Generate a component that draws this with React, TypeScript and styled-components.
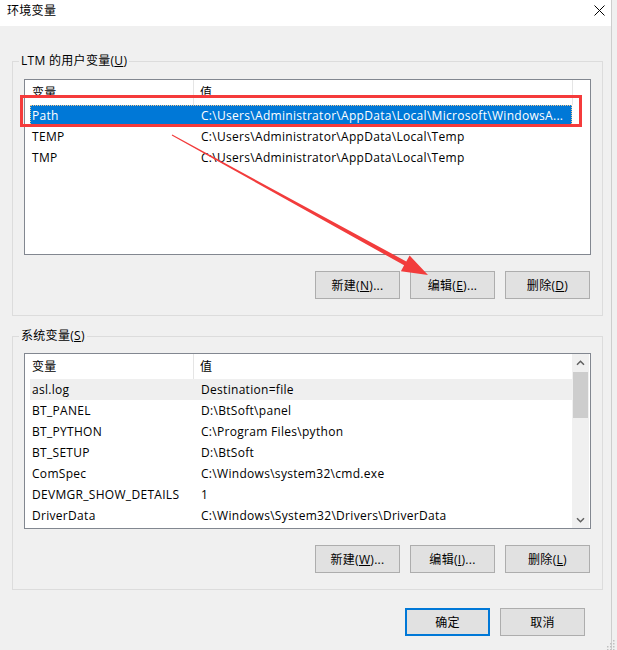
import React from 'react';
import styled, { createGlobalStyle } from 'styled-components';

const GlobalStyle = createGlobalStyle`
  html, body { margin: 0; padding: 0; background: #f0f0f0; }
  body {
    width: 617px; height: 650px; overflow: hidden;
    font-family: "Open Sans", "Noto Sans CJK SC", sans-serif;
    font-size: 12px; letter-spacing: 0.3px; color: #000;
  }
  * { box-sizing: border-box; }
`;

const Page = styled.div`
  position: relative;
  width: 617px;
  height: 650px;
  display: flex;
  background: #f0f0f0;
`;

const Window = styled.div`
  width: 612px;
  height: 650px;
  border-right: 1px solid #cdcdcd;
  background: #f0f0f0;
  display: flex;
  flex-direction: column;
`;

const TitleBar = styled.div`
  height: 26px;
  flex: none;
  background: #fff;
  display: flex;
  justify-content: space-between;
  align-items: flex-start;
  padding: 3px 6px 0 7px;
  line-height: 16px;
`;

const CloseIcon = styled.svg`
  margin-top: 2px;
  width: 11px;
  height: 11px;
`;

const Group = styled.fieldset<{ $top: number }>`
  margin: ${p => p.$top}px 0 0 12px;
  width: 591px;
  border: 1px solid #dcdcdc;
  padding: 0;
  min-width: 0;
`;

const Legend = styled.legend`
  margin-left: 6px;
  padding: 0 2px;
  line-height: 16px;
`;

const GroupBody = styled.div<{ $top: number }>`
  padding: ${p => p.$top}px 11px 16px 11px;
  display: flex;
  flex-direction: column;
`;

const List = styled.div`
  width: 567px;
  height: 176px;
  border: 1px solid #828790;
  background: #fff;
  display: flex;
  overflow: hidden;
`;

const ListContent = styled.div`
  flex: none;
  width: 547px;
  padding-left: 5px;
  display: flex;
  flex-direction: column;
`;

const Row = styled.div<{ $state?: 'selected' | 'hover' | 'none' }>`
  display: grid;
  grid-template-columns: 164px 378px;
  height: 21px;
  line-height: 21px;
  white-space: nowrap;
  background: ${p => (p.$state === 'selected' ? '#0078d7' : p.$state === 'hover' ? '#efefef' : 'transparent')};
  color: ${p => (p.$state === 'selected' ? '#fff' : '#000')};
  outline: ${p => (p.$state === 'selected' ? '1px dotted #f3c58a' : 'none')};
  outline-offset: -1px;
`;

const HeaderRow = styled.div`
  display: grid;
  grid-template-columns: 164px 379px;
  height: 25px;
  line-height: 25px;
  flex: none;
`;

const HeaderCell = styled.div<{ $pad: number }>`
  padding-left: ${p => p.$pad}px;
  border-right: 1px solid #e5e5e5;
`;

const Cell = styled.div<{ $pad: number }>`
  padding-left: ${p => p.$pad}px;
  overflow: hidden;
`;

const ScrollBar = styled.div`
  flex: none;
  width: 17px;
  background: #f0f0f0;
  display: flex;
  flex-direction: column;
  align-items: center;
`;

const ScrollBtn = styled.div`
  width: 17px;
  height: 17px;
  flex: none;
  display: flex;
  align-items: center;
  justify-content: center;
`;

const Thumb = styled.div`
  width: 15px;
  height: 46px;
  margin-top: 1px;
  background: #cdcdcd;
  flex: none;
`;

const Track = styled.div`
  flex: 1;
  width: 100%;
  display: flex;
  flex-direction: column;
  align-items: center;
`;

const ButtonRow = styled.div<{ $top: number; $right: number }>`
  display: flex;
  justify-content: flex-end;
  gap: 10px;
  margin-top: ${p => p.$top}px;
  padding-right: ${p => p.$right}px;
`;

const Button = styled.div<{ $primary?: boolean }>`
  width: 85px;
  height: 28px;
  background: #e1e1e1;
  border: ${p => (p.$primary ? '2px solid #0078d7' : '1px solid #adadad')};
  display: flex;
  align-items: center;
  justify-content: center;
  white-space: nowrap;
`;

const Overlay = styled.svg`
  position: absolute;
  left: 0;
  top: 0;
  width: 617px;
  height: 650px;
  pointer-events: none;
`;

const Grip = styled.svg`
  position: absolute;
  right: 2px;
  bottom: 0;
  width: 10px;
  height: 10px;
`;

type Item = { name: string; value: string; state?: 'selected' | 'hover' | 'none' };

const userVars: Item[] = [
  { name: 'Path', value: 'C:\\Users\\Administrator\\AppData\\Local\\Microsoft\\WindowsA...', state: 'selected' },
  { name: 'TEMP', value: 'C:\\Users\\Administrator\\AppData\\Local\\Temp' },
  { name: 'TMP', value: 'C:\\Users\\Administrator\\AppData\\Local\\Temp' },
];

const sysVars: Item[] = [
  { name: 'asl.log', value: 'Destination=file', state: 'hover' },
  { name: 'BT_PANEL', value: 'D:\\BtSoft\\panel' },
  { name: 'BT_PYTHON', value: 'C:\\Program Files\\python' },
  { name: 'BT_SETUP', value: 'D:\\BtSoft' },
  { name: 'ComSpec', value: 'C:\\Windows\\system32\\cmd.exe' },
  { name: 'DEVMGR_SHOW_DETAILS', value: '1' },
  { name: 'DriverData', value: 'C:\\Windows\\System32\\Drivers\\DriverData' },
];

const Chevron = ({ down }: { down?: boolean }) => (
  <svg width="9" height="6" viewBox="0 0 9 6">
    <path
      d={down ? 'M1 1.2 L4.5 4.7 L8 1.2' : 'M1 4.8 L4.5 1.3 L8 4.8'}
      fill="none"
      stroke="#606060"
      strokeWidth="1.5"
    />
  </svg>
);

const VarList = ({ items, scroll }: { items: Item[]; scroll?: boolean }) => (
  <List>
    <ListContent>
      <HeaderRow>
        <HeaderCell $pad={2}>变量</HeaderCell>
        <HeaderCell $pad={6}>值</HeaderCell>
      </HeaderRow>
      {items.map(it => (
        <Row key={it.name} $state={it.state}>
          <Cell $pad={2}>{it.name}</Cell>
          <Cell $pad={7}>{it.value}</Cell>
        </Row>
      ))}
    </ListContent>
    {scroll && (
      <ScrollBar>
        <ScrollBtn>
          <Chevron />
        </ScrollBtn>
        <Track>
          <Thumb />
        </Track>
        <ScrollBtn>
          <Chevron down />
        </ScrollBtn>
      </ScrollBar>
    )}
  </List>
);

export default function App() {
  return (
    <>
      <GlobalStyle />
      <Page>
        <Window>
          <TitleBar>
            <span>环境变量</span>
            <CloseIcon viewBox="0 0 11 11">
              <path d="M0.5 0.5 L10.5 10.5 M10.5 0.5 L0.5 10.5" stroke="#000" strokeWidth="1" />
            </CloseIcon>
          </TitleBar>

          <Group $top={27}>
            <Legend>
              LTM 的用户变量(<u>U</u>)
            </Legend>
            <GroupBody $top={10}>
              <VarList items={userVars} />
              <ButtonRow $top={16} $right={1}>
                <Button>
                  新建(<u>N</u>)...
                </Button>
                <Button>
                  编辑(<u>E</u>)...
                </Button>
                <Button>
                  删除(<u>D</u>)
                </Button>
              </ButtonRow>
            </GroupBody>
          </Group>

          <Group $top={12}>
            <Legend>
              系统变量(<u>S</u>)
            </Legend>
            <GroupBody $top={9}>
              <VarList items={sysVars} scroll />
              <ButtonRow $top={16} $right={1}>
                <Button>
                  新建(<u>W</u>)...
                </Button>
                <Button>
                  编辑(<u>I</u>)...
                </Button>
                <Button>
                  删除(<u>L</u>)
                </Button>
              </ButtonRow>
            </GroupBody>
          </Group>

          <ButtonRow $top={18} $right={26}>
            <Button $primary>确定</Button>
            <Button>取消</Button>
          </ButtonRow>
        </Window>

        <Grip viewBox="0 0 10 10">
          {[
            [8, 0], [8, 3], [5, 3], [8, 6], [5, 6], [2, 6], [8, 9], [5, 9], [2, 9],
          ].map(([x, y], i) => (
            <rect key={i} x={x} y={y} width="1.5" height="1.5" fill="#c0c0c0" />
          ))}
        </Grip>

        <Overlay viewBox="0 0 617 650">
          <rect x="21.5" y="96.5" width="559" height="29" fill="none" stroke="#f53b3b" strokeWidth="3" />
          <polygon
            points="172.24,134.56 406.3,261.5 409.6,255.5 428,275 400.9,271.3 404.1,265.3 171.76,135.44"
            fill="#f23c3c"
          />
        </Overlay>
      </Page>
    </>
  );
}
